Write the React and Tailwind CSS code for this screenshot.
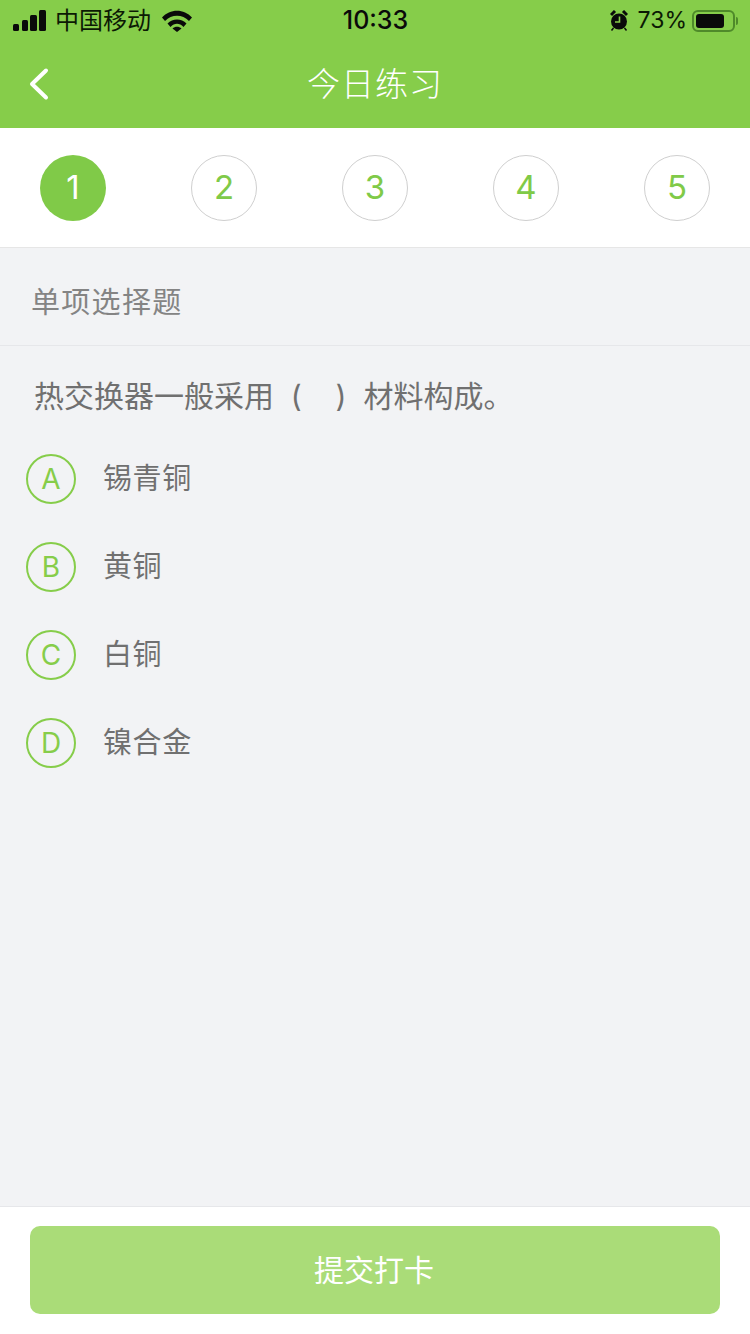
const FONT = "font-['Inter','Noto_Sans_CJK_SC',sans-serif]";

const STEPS = [1, 2, 3, 4, 5];
const OPTIONS = [
  { key: "A", text: "锡青铜" },
  { key: "B", text: "黄铜" },
  { key: "C", text: "白铜" },
  { key: "D", text: "镍合金" },
];

function StatusBar() {
  return (
    <div className="h-10 grid grid-cols-3 items-center pl-[13px] pr-[12px] pt-[1px] text-[#0c1a04]">
      <div className="flex items-center">
        <svg width="33" height="21" viewBox="0 0 33 21" fill="#0a0a0a">
          <rect x="0" y="14" width="6" height="7" rx="1.5" />
          <rect x="9" y="10" width="6" height="11" rx="1.5" />
          <rect x="17" y="5" width="7" height="16" rx="1.5" />
          <rect x="26" y="0" width="7" height="21" rx="1.5" />
        </svg>
        <span className="ml-[9px] text-[24px] leading-none">中国移动</span>
        <svg className="ml-[11px]" width="30" height="22" viewBox="0 0 30 22">
          <path d="M0 7.500C8-1.500 22-1.500 30 7.500L27 11C20.500 4 9.500 4 3 11Z" fill="#0a0a0a" />
          <path d="M5.500 13.500C10.500 8 19.500 8 24.500 13.500L21.500 17C17.500 12.800 12.500 12.800 8.500 17Z" fill="#0a0a0a" />
          <path d="M10.500 18.500C13 16 17 16 19.500 18.500L15 22Z" fill="#0a0a0a" />
        </svg>
      </div>
      <div className="text-center text-[25px] font-medium leading-none text-[#0a0a0a]">10:33</div>
      <div className="flex items-center justify-end">
        <svg width="18" height="21" viewBox="0 0 18 21">
          <circle cx="9" cy="11.500" r="8" fill="#0a0a0a" />
          <path d="M9.500 6.500v5.500H5" stroke="#86cd4a" strokeWidth="1.600" fill="none" />
          <path d="M1 5l4-4M17 5l-4-4" stroke="#0a0a0a" strokeWidth="3" />
          <path d="M3.500 18l-2 2.500M14.500 18l2 2.500" stroke="#0a0a0a" strokeWidth="1.500" />
        </svg>
        <span className="ml-[10px] text-[23px] leading-none">73%</span>
        <div className="ml-[5px] w-[43px] h-[22px] rounded-[6px] border-2 border-[#4f8a2a] p-[2px]">
          <div className="h-full w-[28px] rounded-[3px] bg-[#0a0a0a]" />
        </div>
        <div className="ml-[1px] w-[2px] h-[8px] rounded-r bg-[#4f8a2a]" />
      </div>
    </div>
  );
}

function Stepper() {
  return (
    <div className="h-[120px] bg-white border-b border-[#e6e6e6] flex items-center justify-between px-10">
      {STEPS.map((n) =>
        n === 1 ? (
          <div key={n} className="w-[66px] h-[66px] rounded-full bg-[#80ca48] text-white flex items-center justify-center text-[33px]">
            {n}
          </div>
        ) : (
          <div key={n} className="w-[66px] h-[66px] rounded-full border border-[#cfcfcf] text-[#80ca48] flex items-center justify-center text-[33px]">
            {n}
          </div>
        )
      )}
    </div>
  );
}

export default function App() {
  return (
    <div className={`${FONT} w-[750px] h-[1334px] flex flex-col bg-[#f2f3f5] overflow-hidden`}>
      {/* HEADER */}
      <div className="h-32 bg-[#86cd4a] flex flex-col shrink-0">
        <StatusBar />
        <div className="relative flex-1 flex items-center justify-center pt-[2px]">
          <svg className="absolute left-[28px] top-[27px]" width="22" height="34" viewBox="0 0 22 34" fill="none">
            <path d="M18 3.500L4 17l14 13.500" stroke="#fff" strokeWidth="4" strokeLinecap="round" strokeLinejoin="round" />
          </svg>
          <span className="text-[33px] text-white tracking-[1px] font-light">今日练习</span>
        </div>
      </div>

      <Stepper />

      {/* QUESTION */}
      <div className="flex-1">
        <div className="h-[98px] border-b border-[#e6e7ea] flex items-center pl-[31px] pt-[12px] text-[29px] text-[#848484] tracking-[1.300px]">
          单项选择题
        </div>
        <div className="pl-[34px] mt-[26px] text-[30px] leading-[48px] text-[#707070] whitespace-pre">
          {"热交换器一般采用  (    )  材料构成。"}
        </div>
        <div className="mt-[15px] flex flex-col">
          {OPTIONS.map((o) => (
            <div key={o.key} className="h-[88px] flex items-center pl-[26px]">
              <div className="w-[50px] h-[50px] rounded-full border-2 border-[#86cd4a] flex items-center justify-center text-[28px] text-[#86cd4a]">
                {o.key}
              </div>
              <span className="ml-[27px] text-[29px] tracking-[0.600px] text-[#707070]">{o.text}</span>
            </div>
          ))}
        </div>
      </div>

      {/* FOOTER */}
      <div className="h-[128px] shrink-0 bg-white border-t border-[#e6e7ea] pt-[19px] px-[30px]">
        <button type="button" className="w-full h-[88px] pr-[2px] rounded-[10px] bg-[#aadc78] text-white text-[30px]">
          提交打卡
        </button>
      </div>
    </div>
  );
}
